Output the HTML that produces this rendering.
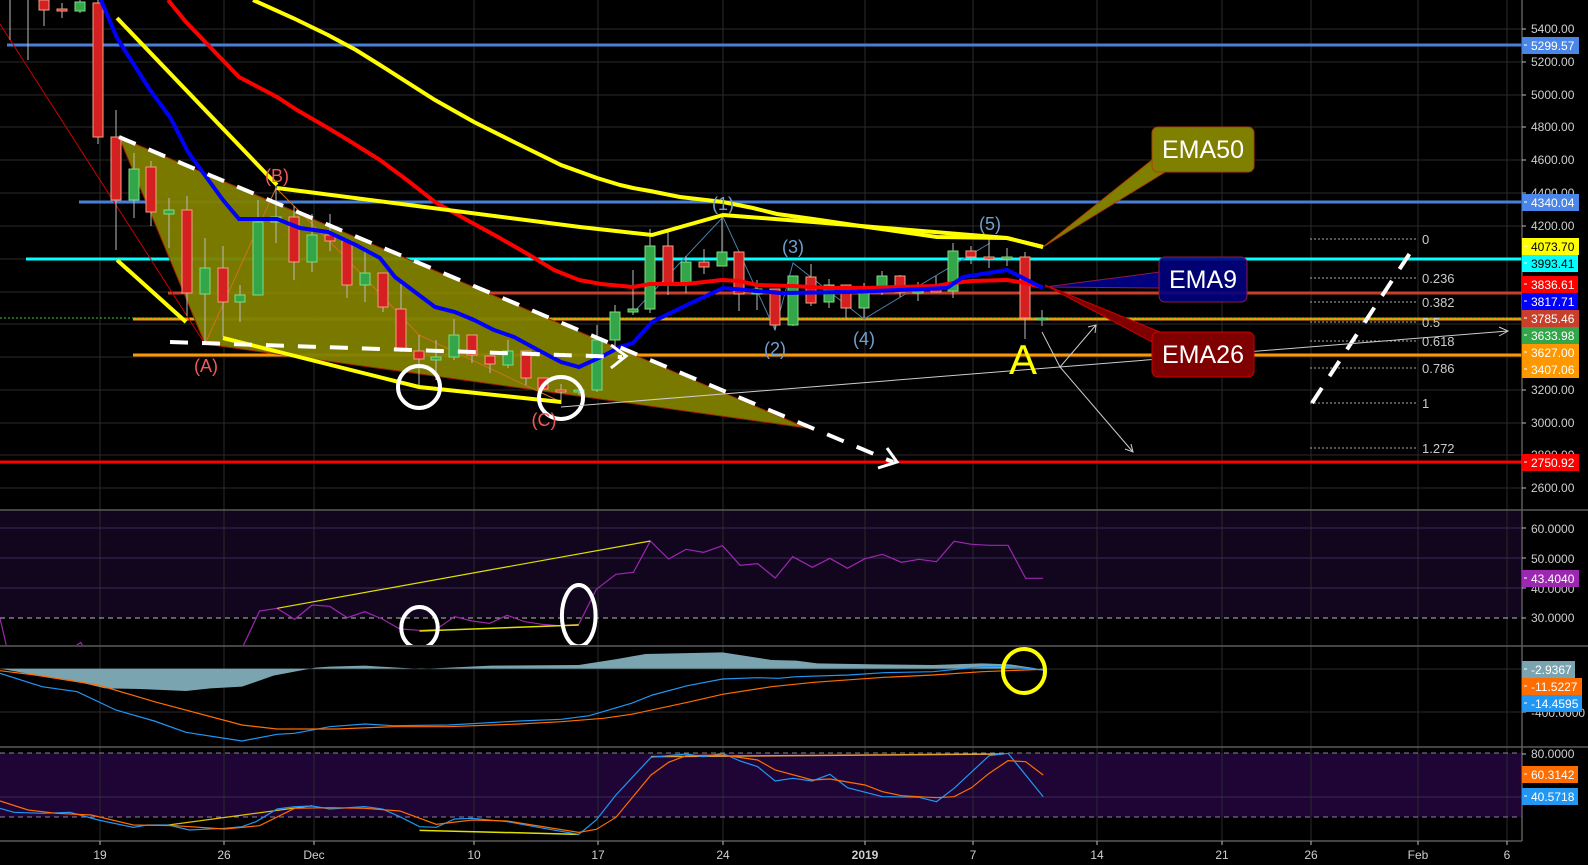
<!DOCTYPE html>
<html><head><meta charset="utf-8"><style>
html,body{margin:0;padding:0;background:#000;overflow:hidden}
svg{display:block}
text{font-family:"Liberation Sans",sans-serif}
.ax{fill:#cfcfcf;font-size:12px}
.lb{font-size:12px}
.ns{vector-effect:non-scaling-stroke}
</style></head><body>
<svg width="1588" height="865" viewBox="0 0 1588 865" xmlns="http://www.w3.org/2000/svg">
<defs>
<clipPath id="cm"><rect x="0" y="0" width="1522" height="509"/></clipPath>
<clipPath id="cr"><rect x="0" y="511" width="1522" height="134"/></clipPath>
<clipPath id="cmacd"><rect x="0" y="647" width="1522" height="99"/></clipPath>
<clipPath id="cs"><rect x="0" y="748" width="1522" height="92"/></clipPath>
</defs>
<rect width="1588" height="865" fill="#000"/>
<rect x="0" y="511" width="1522" height="107" fill="#12061f"/>
<rect x="0" y="753" width="1522" height="64" fill="#1f0535"/>
<g stroke="#2a2a2a" stroke-width="1">
<path d="M100 0V841M224 0V841M314 0V841M474 0V841M598 0V841M723 0V841M865 0V841M973 0V841M1097 0V841M1222 0V841M1311 0V841M1418 0V841M1507 0V841"/>
<path d="M0 29H1522M0 62H1522M0 95H1522M0 127H1522M0 160H1522M0 193H1522M0 226H1522M0 259H1522M0 292H1522M0 324H1522M0 357H1522M0 390H1522M0 423H1522M0 455H1522M0 488H1522"/>
<path d="M0 669H1522M0 712H1522"/>
</g>
<g stroke="#3a2a50"><path d="M0 528H1522M0 558H1522M0 588H1522M0 797H1522"/></g>

<g clip-path="url(#cm)">
<line x1="7" y1="45" x2="1522" y2="45" stroke="#4a7fd8" stroke-width="3"/>
<line x1="79" y1="202" x2="1522" y2="202" stroke="#4a7fd8" stroke-width="3"/>
<line x1="26" y1="259" x2="1522" y2="259" stroke="#00ffff" stroke-width="3"/>
<line x1="168" y1="293" x2="1522" y2="293" stroke="#c8402c" stroke-width="3"/>
<line x1="133" y1="319" x2="1522" y2="319" stroke="#ff9800" stroke-width="3"/>
<line x1="0" y1="318" x2="1522" y2="318" stroke="#3c3" stroke-width="1" stroke-dasharray="2,2"/>
<line x1="133" y1="355" x2="1522" y2="355" stroke="#ff9800" stroke-width="3"/>
<line x1="0" y1="462" x2="1522" y2="462" stroke="#ff0000" stroke-width="3"/>
<line x1="0" y1="24" x2="205" y2="344" stroke="#c00" stroke-width="1"/>
<polygon points="119,137 205,344 807,428" fill="#808000" fill-opacity="0.95" stroke="#a02000" stroke-width="1"/>
<polyline points="205,344 276,188 348,260 419,335 561,402" fill="none" stroke="#d07020" stroke-width="1"/>
<g stroke="#aaa" stroke-width="1" stroke-dasharray="2,2">
<path d="M1310 239H1417M1310 278H1417M1310 302H1417M1310 322H1417M1310 341H1417M1310 368H1417M1310 403H1417M1310 448H1417"/>
</g>
<g fill="#ccc" font-size="13">
<text x="1422" y="244">0</text><text x="1422" y="283">0.236</text><text x="1422" y="307">0.382</text><text x="1422" y="327">0.5</text><text x="1422" y="346">0.618</text><text x="1422" y="373">0.786</text><text x="1422" y="408">1</text><text x="1422" y="453">1.272</text>
</g>
<polyline points="633,313 723,217 775,330 793,263 864,319 990,243" fill="none" stroke="#4a7fa8" stroke-width="1"/>
<!-- candles -->
<path stroke="#bbb" stroke-width="1" fill="none" d="M10 0V40M28 0V60M44 0V26M62 3V18M80 0V13M98 0V144M116 110V250M134 153V218M151 161V226M169 198V248M187 196V316M205 238V345M223 246V337M240 285V322M258 200V295M276 186V243M294 206V280M312 214V272M330 214V251M347 241V298M365 251V302M383 273V312M401 283V352M419 335V387M436 340V380M454 319V360M472 335V363M490 356V373M508 340V368M526 351V385M543 378V389M561 384V404M579 385V395M597 325V392M615 305V352M633 270V315M650 229V313M668 232V295M686 256V293M704 249V274M722 217V266M739 252V311M757 280V310M775 289V330M793 276V326M811 264V306M829 279V308M846 285V318M864 283V318M882 271V295M900 275V297M918 282V301M936 276V292M953 243V298M971 246V264M989 239V268M1007 248V266M1025 252V339M1042 310V326"/>
<g fill="#d42020" stroke="#f4a080" stroke-width="1">
<rect x="39" y="0" width="10" height="10"/><rect x="93" y="3" width="10" height="134"/><rect x="111" y="137" width="10" height="63"/><rect x="146" y="167" width="10" height="45"/><rect x="182" y="210" width="10" height="83"/><rect x="218" y="268" width="10" height="34"/><rect x="289" y="217" width="10" height="45"/><rect x="325" y="235" width="10" height="6"/><rect x="342" y="241" width="10" height="44"/><rect x="378" y="273" width="10" height="34"/><rect x="396" y="309" width="10" height="42"/><rect x="414" y="351" width="10" height="8"/><rect x="467" y="335" width="10" height="20"/><rect x="485" y="356" width="10" height="8"/><rect x="521" y="351" width="10" height="27"/><rect x="538" y="378" width="10" height="11"/><rect x="663" y="246" width="10" height="38"/><rect x="699" y="262" width="10" height="5"/><rect x="734" y="252" width="10" height="42"/><rect x="770" y="289" width="10" height="36"/><rect x="806" y="277" width="10" height="26"/><rect x="841" y="285" width="10" height="23"/><rect x="895" y="276" width="10" height="16"/><rect x="931" y="287" width="10" height="5"/><rect x="966" y="251" width="10" height="6"/><rect x="1020" y="257" width="10" height="61"/><rect x="57" y="9" width="10" height="2"/><rect x="556" y="390" width="10" height="2"/><rect x="984" y="257" width="10" height="2"/>
</g>
<g fill="#34a64a" stroke="#7fdc7f" stroke-width="1">
<rect x="75" y="2" width="10" height="9"/><rect x="129" y="169" width="10" height="31"/><rect x="164" y="210" width="10" height="4"/><rect x="200" y="268" width="10" height="26"/><rect x="235" y="295" width="10" height="7"/><rect x="253" y="222" width="10" height="73"/><rect x="271" y="217" width="10" height="5"/><rect x="307" y="235" width="10" height="27"/><rect x="360" y="273" width="10" height="12"/><rect x="431" y="357" width="10" height="3"/><rect x="449" y="335" width="10" height="22"/><rect x="503" y="351" width="10" height="14"/><rect x="574" y="390" width="10" height="2"/><rect x="592" y="340" width="10" height="50"/><rect x="610" y="312" width="10" height="28"/><rect x="628" y="309" width="10" height="3"/><rect x="645" y="246" width="10" height="63"/><rect x="681" y="262" width="10" height="21"/><rect x="717" y="252" width="10" height="14"/><rect x="752" y="289" width="10" height="5"/><rect x="788" y="276" width="10" height="49"/><rect x="824" y="285" width="10" height="17"/><rect x="859" y="287" width="10" height="21"/><rect x="877" y="276" width="10" height="10"/><rect x="913" y="287" width="10" height="6"/><rect x="948" y="251" width="10" height="40"/><rect x="1002" y="257" width="10" height="2"/><rect x="1037" y="318" width="10" height="2"/>
</g>
<polyline fill="none" stroke="#ffff00" stroke-width="4" points="253,0 293,18 328,35 356,50 380,65 435,100 474,122 514,142 561,165 597,178 620,185 633,188 650,191 680,197 723,202 753,208 777,214 813,219 867,227 937,237 1007,238 1043,247"/>
<polyline fill="none" stroke="#ff0000" stroke-width="4" points="168,0 186,22 239,77 277,97 297,110 328,128 348,140 380,160 407,180 435,202 467,220 498,237 526,253 554,270 579,280 601,284 633,287 650,284 686,284 722,280 739,281 757,285 793,286 829,288 864,288 900,287 936,286 953,283 971,281 1007,280 1025,283 1042,287"/>
<polyline fill="none" stroke="#0000ff" stroke-width="4" points="101,0 117,38 150,90 170,117 188,152 223,200 239,219 277,219 300,228 328,232 356,245 380,258 395,277 435,307 455,312 474,320 494,330 514,337 538,350 561,362 579,367 601,357 620,347 633,343 652,322 687,305 723,288 780,293 850,292 947,288 963,277 1007,270 1043,288"/>
<g stroke="#ffff00" stroke-width="4" fill="none">
<polyline points="117,18 277,185"/>
<polyline points="117,260 186,322"/>
<polyline points="223,338 419,387 561,402"/>
<polyline points="277,188 580,227 652,235 723,215 813,222 1007,238 1043,247"/>
</g>
<g stroke="#fff" stroke-width="4" fill="none" stroke-dasharray="18,14">
<line x1="119" y1="137" x2="893" y2="462"/>
<line x1="170" y1="342" x2="622" y2="357"/>
<line x1="1312" y1="403" x2="1412" y2="250"/>
</g>
<g stroke="#fff" stroke-width="3" fill="none">
<polyline points="887,448 897,462 878,468"/>
<polyline points="611,345 626,356 611,368"/>
</g>
<ellipse cx="419" cy="387" rx="21" ry="21" fill="none" stroke="#fff" stroke-width="4"/>
<ellipse cx="561" cy="398" rx="22" ry="21" fill="none" stroke="#fff" stroke-width="4"/>
<g stroke="#ccc" stroke-width="1" fill="none">
<line x1="561" y1="407" x2="1508" y2="331"/><polyline points="1499,327 1508,331 1499,336"/>
<polyline points="1042,332 1060,367 1096,325"/><polyline points="1088,327 1096,325 1095,333"/>
<line x1="1060" y1="367" x2="1133" y2="452"/><polyline points="1125,449 1133,452 1131,444"/>
</g>
<g fill="#f25a5a" font-size="18" text-anchor="middle">
<text x="206" y="372">(A)</text><text x="277" y="182">(B)</text><text x="544" y="426">(C)</text>
</g>
<g fill="#6fa0d0" font-size="18" text-anchor="middle">
<text x="723" y="210">(1)</text><text x="775" y="355">(2)</text><text x="793" y="253">(3)</text><text x="864" y="345">(4)</text><text x="990" y="230">(5)</text>
</g>
<text x="1023" y="374" fill="#ffff00" font-size="42" text-anchor="middle">A</text>
<polygon points="1152,160 1165,172 1043,247" fill="#808000" stroke="#b04000" stroke-width="1"/>
<rect x="1152" y="127" width="102" height="45" rx="6" fill="#808000" stroke="#b04000" stroke-width="1"/>
<text x="1203" y="158" fill="#fff" font-size="25" text-anchor="middle">EMA50</text>
<polygon points="1045,287 1160,272 1160,288" fill="#00007f" stroke="#8b1a4a" stroke-width="1"/>
<polygon points="1045,285 1160,332 1152,342" fill="#7f0000" stroke="#c00" stroke-width="1"/>
<rect x="1159" y="257" width="88" height="45" rx="6" fill="#00007f" fill-opacity="0.9" stroke="#8b1a4a" stroke-width="1"/>
<text x="1203" y="288" fill="#fff" font-size="25" text-anchor="middle">EMA9</text>
<rect x="1152" y="332" width="102" height="45" rx="6" fill="#7f0000" stroke="#c00" stroke-width="1"/>
<text x="1203" y="363" fill="#fff" font-size="25" text-anchor="middle">EMA26</text>
</g>

<g clip-path="url(#cr)">
<line x1="0" y1="618" x2="1522" y2="618" stroke="#bbb" stroke-dasharray="5,4"/>
<g transform="translate(0,505) scale(0.70151,0.33333)" fill="none">
<polyline class="ns" stroke="#9c27b0" stroke-width="1.2" points="0,340 10,430 100,430 110,420 115,412 120,430 345,430 370,318 395,310 420,343 445,300 470,304 495,338 520,320 545,342 570,372 598,376 622,373 648,335 673,348 698,355 723,331 748,350 773,358 798,362 825,358 850,253 878,208 903,202 927,108 953,162 978,133 1003,142 1030,122 1055,181 1080,176 1105,219 1130,155 1158,187 1183,160 1208,190 1233,161 1258,148 1285,172 1310,163 1335,170 1360,109 1385,118 1410,121 1437,121 1462,220 1487,220"/>
<polyline class="ns" stroke="#e0e000" stroke-width="1.2" points="395,310 927,108"/>
<polyline class="ns" stroke="#e0e000" stroke-width="1.5" points="598,378 825,360"/>
<ellipse class="ns" cx="598" cy="368" rx="26" ry="62" stroke="#fff" stroke-width="4"/>
<ellipse class="ns" cx="825" cy="332" rx="24" ry="92" stroke="#fff" stroke-width="4"/>
</g>
</g>
<g clip-path="url(#cmacd)">
<g transform="translate(0,505) scale(0.70151,0.33333)" fill="none">
<polygon fill="#7aa5b0" points="0,491 50,510 100,525 150,550 200,552 265,558 300,550 345,545 390,512 420,500 450,488 470,485 520,482 600,492 700,482 825,480 880,462 920,447 1030,442 1100,465 1135,467 1165,475 1250,478 1330,480 1400,475 1440,478 1487,493 1487,491"/>
<polyline class="ns" stroke="#2196f3" stroke-width="1.2" points="0,505 60,545 110,560 165,615 220,648 265,682 345,708 395,688 420,685 470,665 520,657 560,662 640,660 740,648 800,643 840,632 900,595 930,570 980,542 1030,522 1080,518 1110,520 1135,515 1210,510 1260,503 1330,500 1400,485 1430,484 1487,495"/>
<polyline class="ns" stroke="#ff6d00" stroke-width="1.2" points="0,497 50,510 140,540 220,590 345,660 395,672 480,672 560,665 640,665 740,657 800,650 860,640 900,628 980,592 1030,568 1100,545 1160,532 1260,517 1330,510 1400,500 1487,493"/>
</g>
<ellipse cx="1024" cy="671" rx="21" ry="22" fill="none" stroke="#ffff00" stroke-width="4"/>
</g>
<g clip-path="url(#cs)">
<line x1="0" y1="753" x2="1522" y2="753" stroke="#888" stroke-dasharray="5,4"/>
<line x1="0" y1="817" x2="1522" y2="817" stroke="#888" stroke-dasharray="5,4"/>
<g transform="translate(0,505) scale(0.70151,0.33333)" fill="none">
<polyline class="ns" stroke="#e0c000" stroke-width="1.2" points="240,960 445,902"/>
<polyline class="ns" stroke="#e0e000" stroke-width="1.5" points="598,976 825,988"/>
<polyline class="ns" stroke="#e0a030" stroke-width="1.5" points="928,755 1430,747"/>
<polyline class="ns" stroke="#2196f3" stroke-width="1.2" points="0,910 20,922 60,925 100,922 140,945 190,967 210,960 240,960 270,975 320,970 345,965 365,950 395,912 420,905 445,903 470,912 520,905 545,912 570,935 598,965 622,967 648,942 673,940 723,950 775,970 825,988 850,945 878,870 928,757 978,747 1003,755 1030,745 1055,768 1080,785 1105,828 1130,820 1158,828 1183,808 1208,848 1258,875 1310,877 1335,890 1360,850 1410,752 1437,745 1487,875"/>
<polyline class="ns" stroke="#ff6d00" stroke-width="1.2" points="0,888 40,915 80,925 130,930 190,960 250,962 320,972 370,962 420,910 470,908 520,910 570,918 622,958 673,945 723,948 825,982 850,973 878,937 928,810 953,772 978,752 1030,750 1080,765 1105,795 1158,825 1183,822 1233,840 1258,860 1285,872 1335,878 1360,875 1385,848 1410,805 1437,767 1462,770 1487,810"/>
</g>
</g>

<g stroke="#5a5a5a" stroke-width="1.5">
<line x1="0" y1="510" x2="1588" y2="510"/>
<line x1="0" y1="646" x2="1588" y2="646"/>
<line x1="0" y1="747" x2="1588" y2="747"/>
<line x1="0" y1="841" x2="1522" y2="841"/>
<line x1="1522" y1="0" x2="1522" y2="841"/>
</g>
<g stroke="#bbb"><path d="M1522 29h4M1522 62h4M1522 95h4M1522 127h4M1522 160h4M1522 193h4M1522 226h4M1522 390h4M1522 423h4M1522 455h4M1522 488h4M1522 528h4M1522 558h4M1522 588h4M1522 618h4M1522 712h4M1522 754h4M100 841v4M224 841v4M314 841v4M474 841v4M598 841v4M723 841v4M865 841v4M973 841v4M1097 841v4M1222 841v4M1311 841v4M1418 841v4M1507 841v4"/></g>
<g class="ax">
<text x="1531" y="33">5400.00</text><text x="1531" y="66">5200.00</text><text x="1531" y="99">5000.00</text><text x="1531" y="131">4800.00</text><text x="1531" y="164">4600.00</text><text x="1531" y="197">4400.00</text><text x="1531" y="230">4200.00</text><text x="1531" y="394">3200.00</text><text x="1531" y="427">3000.00</text><text x="1531" y="459">2800.00</text><text x="1531" y="492">2600.00</text>
<text x="1531" y="533">60.0000</text><text x="1531" y="563">50.0000</text><text x="1531" y="593">40.0000</text><text x="1531" y="622">30.0000</text>
<text x="1531" y="717">-400.0000</text><text x="1531" y="758">80.0000</text>
</g>
<g class="lb">
<rect x="1522" y="37" width="57" height="17" fill="#4a86e8"/><text x="1531" y="50" fill="#fff">5299.57</text>
<rect x="1522" y="194" width="57" height="17" fill="#4a86e8"/><text x="1531" y="207" fill="#fff">4340.04</text>
<rect x="1522" y="238" width="57" height="17" fill="#ffff00"/><text x="1531" y="251" fill="#000">4073.70</text>
<rect x="1522" y="255" width="56" height="17" fill="#00ffff"/><text x="1531" y="268" fill="#000">3993.41</text>
<rect x="1522" y="276" width="56" height="17" fill="#ff0000"/><text x="1531" y="289" fill="#fff">3836.61</text>
<rect x="1522" y="293" width="56" height="17" fill="#0000ff"/><text x="1531" y="306" fill="#fff">3817.71</text>
<rect x="1522" y="310" width="57" height="17" fill="#c8402c"/><text x="1531" y="323" fill="#fff">3785.46</text>
<rect x="1522" y="327" width="57" height="17" fill="#34a64a"/><text x="1531" y="340" fill="#fff">3633.98</text>
<rect x="1522" y="344" width="57" height="17" fill="#ff9800"/><text x="1531" y="357" fill="#fff">3627.00</text>
<rect x="1522" y="361" width="57" height="17" fill="#ff9800"/><text x="1531" y="374" fill="#fff">3407.06</text>
<rect x="1522" y="454" width="57" height="17" fill="#ff0000"/><text x="1531" y="467" fill="#fff">2750.92</text>
<rect x="1522" y="570" width="57" height="17" fill="#9c27b0"/><text x="1531" y="583" fill="#fff">43.4040</text>
<rect x="1522" y="661" width="53" height="17" fill="#7aa5b0"/><text x="1531" y="674" fill="#fff">-2.9367</text>
<rect x="1522" y="678" width="60" height="17" fill="#ff6d00"/><text x="1531" y="691" fill="#fff">-11.5227</text>
<rect x="1522" y="695" width="60" height="17" fill="#2196f3"/><text x="1531" y="708" fill="#fff">-14.4595</text>
<rect x="1522" y="766" width="56" height="17" fill="#ff6d00"/><text x="1531" y="779" fill="#fff">60.3142</text>
<rect x="1522" y="788" width="56" height="17" fill="#2196f3"/><text x="1531" y="801" fill="#fff">40.5718</text>
</g>
<g stroke="#fff"><path d="M1524 45h3M1524 202h3M1524 246h3M1524 263h3M1524 284h3M1524 301h3M1524 318h3M1524 335h3M1524 352h3M1524 369h3M1524 462h3M1524 578h3M1524 669h3M1524 686h3M1524 703h3M1524 774h3M1524 796h3"/></g>
<g class="ax" text-anchor="middle">
<text x="100" y="859">19</text><text x="224" y="859">26</text><text x="314" y="859">Dec</text><text x="474" y="859">10</text><text x="598" y="859">17</text><text x="723" y="859">24</text><text x="865" y="859" font-weight="bold">2019</text><text x="973" y="859">7</text><text x="1097" y="859">14</text><text x="1222" y="859">21</text><text x="1311" y="859">26</text><text x="1418" y="859">Feb</text><text x="1507" y="859">6</text>
</g>
</svg>
</body></html>
